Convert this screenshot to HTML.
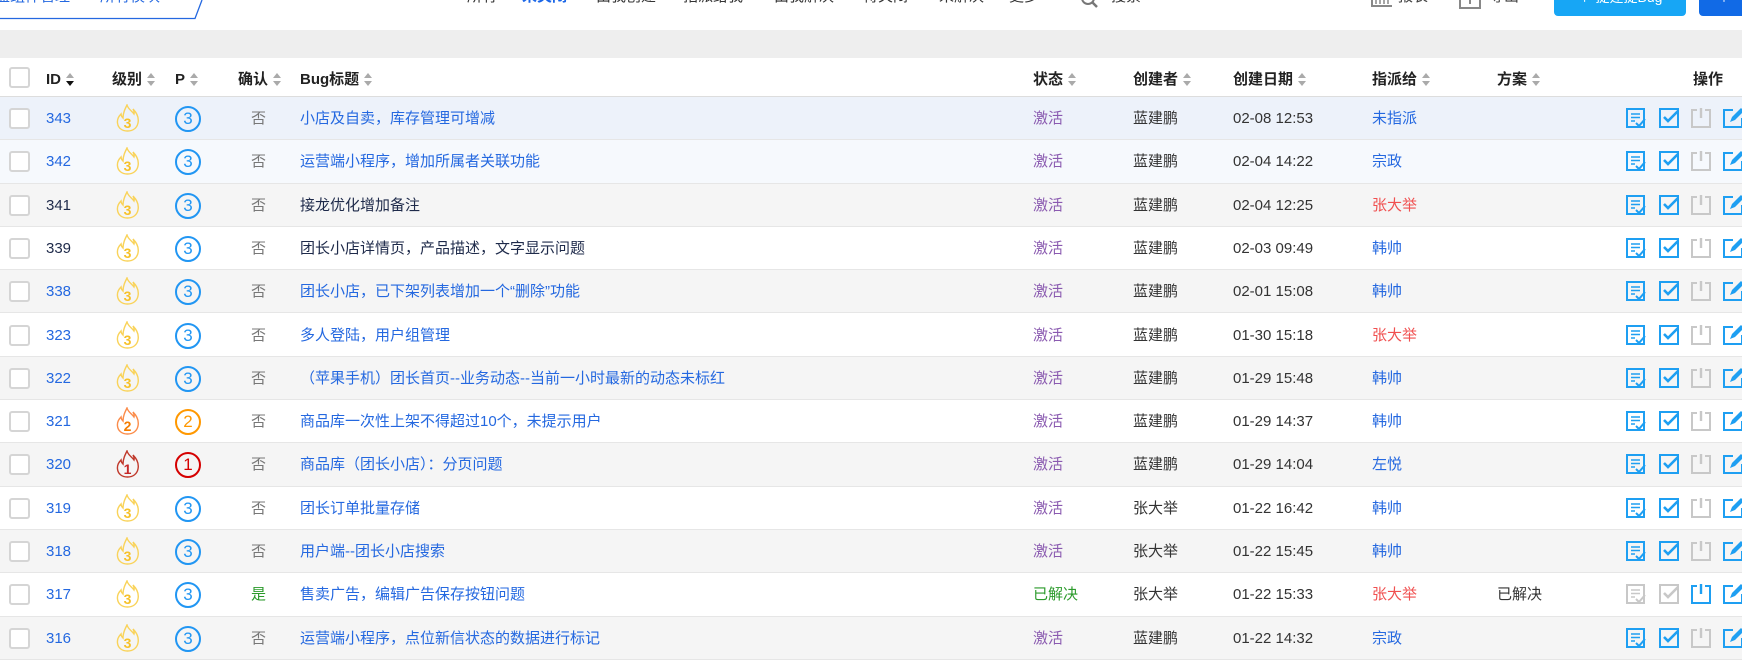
<!DOCTYPE html>
<html><head><meta charset="utf-8"><style>
*{margin:0;padding:0;box-sizing:border-box}
body{width:1742px;height:642px;overflow:hidden;background:#fff;font-family:"Liberation Sans","Noto Sans CJK SC",sans-serif;font-size:15px;color:#333;position:relative}
.a{position:absolute;white-space:nowrap}
.band{position:absolute;left:0;top:30px;width:1742px;height:28px;background:#eee}
.hdr{position:absolute;left:0;top:58px;width:1742px;height:39px;border-bottom:1px solid #ddd;font-weight:bold;color:#222}
.row{position:absolute;left:0;width:1742px;height:43.3px;border-bottom:1px solid #e6e6e6}
.cb{position:absolute;left:9px;width:21px;height:21px;border:2px solid #d5d5d5;border-radius:3px;background:#fff}
.s{display:inline-block;vertical-align:middle;margin-left:5px;width:9px;height:14px;position:relative}
.s:before{content:"";position:absolute;left:0;top:0;border:4.5px solid transparent;border-bottom:5px solid #aaa;border-top:0}
.s:after{content:"";position:absolute;left:0;top:8px;border:4.5px solid transparent;border-top:5px solid #aaa;border-bottom:0}
.sd:after{border-top-color:#111}
.c{line-height:43px;top:0}
.blue{color:#2468e0}.dk{color:#1e2a4a}.pur{color:#8a5ab0}.grn{color:#2a9a2a}.red{color:#f05050}.gr{color:#777}
.pc{position:absolute;left:175px;top:9px;width:26px;height:26px;border:2px solid #2196f3;border-radius:50%;color:#2196f3;text-align:center;line-height:22px;font-size:17px}
.fl{position:absolute;left:115px;top:7px}
.ic{position:absolute;top:11px}
.nv{top:-15px}
</style></head><body>

<div class="a nv" style="left:-5px;color:#2468e0;font-size:15px">盟组件管理　　所有模块</div>
<svg class="a" style="left:0;top:0" width="205" height="22"><path d="M0 18.5H195L202 0" fill="none" stroke="#2468e0" stroke-width="1.3"/></svg>
<div class="a nv" style="left:467px;color:#333">所有</div>
<div class="a nv" style="left:522px;color:#1a66e8;font-weight:bold">未关闭</div>
<div class="a nv" style="left:596px;color:#333">由我创建</div>
<div class="a nv" style="left:683px;color:#333">指派给我</div>
<div class="a nv" style="left:774px;color:#333">由我解决</div>
<div class="a nv" style="left:863px;color:#333">待关闭</div>
<div class="a nv" style="left:939px;color:#333">未解决</div>
<div class="a nv" style="left:1009px;color:#333">更多</div>
<svg class="a" style="left:1080px;top:0" width="20" height="10"><circle cx="8" cy="-2" r="6" fill="none" stroke="#777" stroke-width="2"/><path d="M12 2L17 7" stroke="#777" stroke-width="2.5"/></svg>
<div class="a nv" style="left:1111px;color:#333">搜索</div>
<svg class="a" style="left:1371px;top:0" width="22" height="8"><path d="M1 0V6H21" fill="none" stroke="#888" stroke-width="2"/><path d="M5 0V4M9 0V4M13 0V4M17 0V4" stroke="#888" stroke-width="1.5"/></svg>
<div class="a nv" style="left:1398px;color:#444">报表</div>
<svg class="a" style="left:1459px;top:0" width="22" height="10"><path d="M1 0V8H21V0" fill="none" stroke="#888" stroke-width="2"/><path d="M11 0V4" stroke="#888" stroke-width="2"/></svg>
<div class="a nv" style="left:1489px;color:#444">导出</div>
<div class="a" style="left:1554px;top:-8px;width:132px;height:24px;background:#17a6f5;border-radius:4px;color:#fff;text-align:center;font-size:14px;line-height:10px">＋ 提建提Bug</div>
<div class="a" style="left:1699px;top:-8px;width:60px;height:24px;background:#116ae6;border-radius:4px;color:#fff;font-size:14px;line-height:10px;padding-left:18px">＋</div>

<div class="band"></div>

<div class="hdr">
<div class="cb" style="top:9px"></div>
<div class="a c" style="left:46px">ID<span class="s sd"></span></div>
<div class="a c" style="left:112px">级别<span class="s"></span></div>
<div class="a c" style="left:175px">P<span class="s"></span></div>
<div class="a c" style="left:238px">确认<span class="s"></span></div>
<div class="a c" style="left:300px">Bug标题<span class="s"></span></div>
<div class="a c" style="left:1033px">状态<span class="s"></span></div>
<div class="a c" style="left:1133px">创建者<span class="s"></span></div>
<div class="a c" style="left:1233px">创建日期<span class="s"></span></div>
<div class="a c" style="left:1372px">指派给<span class="s"></span></div>
<div class="a c" style="left:1497px">方案<span class="s"></span></div>
<div class="a c" style="left:1693px">操作</div>
</div>

<svg width="0" height="0" style="position:absolute">
<defs>
<path id="flame" d="M12 1C13 5 17 7 19 10C19.5 8.5 19 7 18 5C22 9 24 14 23 19C22 24 18 27 12.5 27C7 27 3 24 2.5 19C2 15 4 12 6 10C6 12 7 13 8 14C8 9 10 5 12 1Z"/>
<g id="i1"><rect x="1" y="1" width="17" height="18" fill="none" stroke="currentColor" stroke-width="2"/><path d="M5 6H14M5 9.5H14M5 13H9" stroke="currentColor" stroke-width="1.5"/><path d="M10 15L13 18L19 11" fill="none" stroke="currentColor" stroke-width="2"/></g>
<g id="i2"><rect x="1" y="1" width="18" height="18" fill="none" stroke="currentColor" stroke-width="2"/><path d="M5 9L9 13L19 3" fill="none" stroke="currentColor" stroke-width="2.6"/></g>
<g id="i3"><path d="M6 2H1V19H19V2H14" fill="none" stroke="currentColor" stroke-width="2"/><path d="M10 0V10" stroke="currentColor" stroke-width="2.4"/></g>
<g id="i4"><path d="M10 2H1V19H19V10" fill="none" stroke="currentColor" stroke-width="2"/><path d="M7 14L9 9L18 0L21 3L12 12Z" fill="currentColor"/></g>
</defs></svg>

<div class="row" style="top:97px;background:#edf2fa"><div class="cb" style="top:11px"></div><div class="a c blue" style="left:46px">343</div><svg class="fl" width="26" height="28"><use href="#flame" fill="none" stroke="#f9d35a" stroke-width="1.4"/><text x="12.5" y="24" font-size="14" font-weight="bold" fill="#f6c12a" text-anchor="middle" font-family="Liberation Sans">3</text></svg><div class="pc">3</div><div class="a c gr" style="left:251px">否</div><div class="a c blue" style="left:300px">小店及自卖，库存管理可增减</div><div class="a c pur" style="left:1033px">激活</div><div class="a c" style="left:1133px">蓝建鹏</div><div class="a c" style="left:1233px">02-08 12:53</div><div class="a c blue" style="left:1372px">未指派</div><svg class="ic" style="left:1626px;color:#1e9ff2" width="21" height="21"><use href="#i1"/></svg><svg class="ic" style="left:1659px;color:#1e9ff2" width="21" height="21"><use href="#i2"/></svg><svg class="ic" style="left:1691px;color:#c8c8c8" width="21" height="21"><use href="#i3"/></svg><svg class="ic" style="left:1723px;color:#1e9ff2" width="22" height="21"><use href="#i4"/></svg></div>

<div class="row" style="top:140.3px;background:#f6f9fd"><div class="cb" style="top:11px"></div><div class="a c blue" style="left:46px">342</div><svg class="fl" width="26" height="28"><use href="#flame" fill="none" stroke="#f9d35a" stroke-width="1.4"/><text x="12.5" y="24" font-size="14" font-weight="bold" fill="#f6c12a" text-anchor="middle" font-family="Liberation Sans">3</text></svg><div class="pc">3</div><div class="a c gr" style="left:251px">否</div><div class="a c blue" style="left:300px">运营端小程序，增加所属者关联功能</div><div class="a c pur" style="left:1033px">激活</div><div class="a c" style="left:1133px">蓝建鹏</div><div class="a c" style="left:1233px">02-04 14:22</div><div class="a c blue" style="left:1372px">宗政</div><svg class="ic" style="left:1626px;color:#1e9ff2" width="21" height="21"><use href="#i1"/></svg><svg class="ic" style="left:1659px;color:#1e9ff2" width="21" height="21"><use href="#i2"/></svg><svg class="ic" style="left:1691px;color:#c8c8c8" width="21" height="21"><use href="#i3"/></svg><svg class="ic" style="left:1723px;color:#1e9ff2" width="22" height="21"><use href="#i4"/></svg></div>

<div class="row" style="top:183.6px;background:#f5f5f5"><div class="cb" style="top:11px"></div><div class="a c dk" style="left:46px">341</div><svg class="fl" width="26" height="28"><use href="#flame" fill="none" stroke="#f9d35a" stroke-width="1.4"/><text x="12.5" y="24" font-size="14" font-weight="bold" fill="#f6c12a" text-anchor="middle" font-family="Liberation Sans">3</text></svg><div class="pc">3</div><div class="a c gr" style="left:251px">否</div><div class="a c dk" style="left:300px">接龙优化增加备注</div><div class="a c pur" style="left:1033px">激活</div><div class="a c" style="left:1133px">蓝建鹏</div><div class="a c" style="left:1233px">02-04 12:25</div><div class="a c red" style="left:1372px">张大举</div><svg class="ic" style="left:1626px;color:#1e9ff2" width="21" height="21"><use href="#i1"/></svg><svg class="ic" style="left:1659px;color:#1e9ff2" width="21" height="21"><use href="#i2"/></svg><svg class="ic" style="left:1691px;color:#c8c8c8" width="21" height="21"><use href="#i3"/></svg><svg class="ic" style="left:1723px;color:#1e9ff2" width="22" height="21"><use href="#i4"/></svg></div>

<div class="row" style="top:226.9px;background:#fff"><div class="cb" style="top:11px"></div><div class="a c dk" style="left:46px">339</div><svg class="fl" width="26" height="28"><use href="#flame" fill="none" stroke="#f9d35a" stroke-width="1.4"/><text x="12.5" y="24" font-size="14" font-weight="bold" fill="#f6c12a" text-anchor="middle" font-family="Liberation Sans">3</text></svg><div class="pc">3</div><div class="a c gr" style="left:251px">否</div><div class="a c dk" style="left:300px">团长小店详情页，产品描述，文字显示问题</div><div class="a c pur" style="left:1033px">激活</div><div class="a c" style="left:1133px">蓝建鹏</div><div class="a c" style="left:1233px">02-03 09:49</div><div class="a c blue" style="left:1372px">韩帅</div><svg class="ic" style="left:1626px;color:#1e9ff2" width="21" height="21"><use href="#i1"/></svg><svg class="ic" style="left:1659px;color:#1e9ff2" width="21" height="21"><use href="#i2"/></svg><svg class="ic" style="left:1691px;color:#c8c8c8" width="21" height="21"><use href="#i3"/></svg><svg class="ic" style="left:1723px;color:#1e9ff2" width="22" height="21"><use href="#i4"/></svg></div>

<div class="row" style="top:270.2px;background:#f5f5f5"><div class="cb" style="top:11px"></div><div class="a c blue" style="left:46px">338</div><svg class="fl" width="26" height="28"><use href="#flame" fill="none" stroke="#f9d35a" stroke-width="1.4"/><text x="12.5" y="24" font-size="14" font-weight="bold" fill="#f6c12a" text-anchor="middle" font-family="Liberation Sans">3</text></svg><div class="pc">3</div><div class="a c gr" style="left:251px">否</div><div class="a c blue" style="left:300px">团长小店，已下架列表增加一个“删除”功能</div><div class="a c pur" style="left:1033px">激活</div><div class="a c" style="left:1133px">蓝建鹏</div><div class="a c" style="left:1233px">02-01 15:08</div><div class="a c blue" style="left:1372px">韩帅</div><svg class="ic" style="left:1626px;color:#1e9ff2" width="21" height="21"><use href="#i1"/></svg><svg class="ic" style="left:1659px;color:#1e9ff2" width="21" height="21"><use href="#i2"/></svg><svg class="ic" style="left:1691px;color:#c8c8c8" width="21" height="21"><use href="#i3"/></svg><svg class="ic" style="left:1723px;color:#1e9ff2" width="22" height="21"><use href="#i4"/></svg></div>

<div class="row" style="top:313.5px;background:#fff"><div class="cb" style="top:11px"></div><div class="a c blue" style="left:46px">323</div><svg class="fl" width="26" height="28"><use href="#flame" fill="none" stroke="#f9d35a" stroke-width="1.4"/><text x="12.5" y="24" font-size="14" font-weight="bold" fill="#f6c12a" text-anchor="middle" font-family="Liberation Sans">3</text></svg><div class="pc">3</div><div class="a c gr" style="left:251px">否</div><div class="a c blue" style="left:300px">多人登陆，用户组管理</div><div class="a c pur" style="left:1033px">激活</div><div class="a c" style="left:1133px">蓝建鹏</div><div class="a c" style="left:1233px">01-30 15:18</div><div class="a c red" style="left:1372px">张大举</div><svg class="ic" style="left:1626px;color:#1e9ff2" width="21" height="21"><use href="#i1"/></svg><svg class="ic" style="left:1659px;color:#1e9ff2" width="21" height="21"><use href="#i2"/></svg><svg class="ic" style="left:1691px;color:#c8c8c8" width="21" height="21"><use href="#i3"/></svg><svg class="ic" style="left:1723px;color:#1e9ff2" width="22" height="21"><use href="#i4"/></svg></div>

<div class="row" style="top:356.8px;background:#f5f5f5"><div class="cb" style="top:11px"></div><div class="a c blue" style="left:46px">322</div><svg class="fl" width="26" height="28"><use href="#flame" fill="none" stroke="#f9d35a" stroke-width="1.4"/><text x="12.5" y="24" font-size="14" font-weight="bold" fill="#f6c12a" text-anchor="middle" font-family="Liberation Sans">3</text></svg><div class="pc">3</div><div class="a c gr" style="left:251px">否</div><div class="a c blue" style="left:300px">（苹果手机）团长首页--业务动态--当前一小时最新的动态未标红</div><div class="a c pur" style="left:1033px">激活</div><div class="a c" style="left:1133px">蓝建鹏</div><div class="a c" style="left:1233px">01-29 15:48</div><div class="a c blue" style="left:1372px">韩帅</div><svg class="ic" style="left:1626px;color:#1e9ff2" width="21" height="21"><use href="#i1"/></svg><svg class="ic" style="left:1659px;color:#1e9ff2" width="21" height="21"><use href="#i2"/></svg><svg class="ic" style="left:1691px;color:#c8c8c8" width="21" height="21"><use href="#i3"/></svg><svg class="ic" style="left:1723px;color:#1e9ff2" width="22" height="21"><use href="#i4"/></svg></div>

<div class="row" style="top:400.1px;background:#fff"><div class="cb" style="top:11px"></div><div class="a c blue" style="left:46px">321</div><svg class="fl" width="26" height="28"><use href="#flame" fill="none" stroke="#fb8c4a" stroke-width="1.4"/><text x="12.5" y="24" font-size="14" font-weight="bold" fill="#f57c00" text-anchor="middle" font-family="Liberation Sans">2</text></svg><div class="pc" style="border-color:#ff9800;color:#ff9800">2</div><div class="a c gr" style="left:251px">否</div><div class="a c blue" style="left:300px">商品库一次性上架不得超过10个，未提示用户</div><div class="a c pur" style="left:1033px">激活</div><div class="a c" style="left:1133px">蓝建鹏</div><div class="a c" style="left:1233px">01-29 14:37</div><div class="a c blue" style="left:1372px">韩帅</div><svg class="ic" style="left:1626px;color:#1e9ff2" width="21" height="21"><use href="#i1"/></svg><svg class="ic" style="left:1659px;color:#1e9ff2" width="21" height="21"><use href="#i2"/></svg><svg class="ic" style="left:1691px;color:#c8c8c8" width="21" height="21"><use href="#i3"/></svg><svg class="ic" style="left:1723px;color:#1e9ff2" width="22" height="21"><use href="#i4"/></svg></div>

<div class="row" style="top:443.4px;background:#f5f5f5"><div class="cb" style="top:11px"></div><div class="a c blue" style="left:46px">320</div><svg class="fl" width="26" height="28"><use href="#flame" fill="none" stroke="#c0392b" stroke-width="1.4"/><text x="12.5" y="24" font-size="14" font-weight="bold" fill="#c62828" text-anchor="middle" font-family="Liberation Sans">1</text></svg><div class="pc" style="border-color:#d50000;color:#d50000">1</div><div class="a c gr" style="left:251px">否</div><div class="a c blue" style="left:300px">商品库（团长小店）：分页问题</div><div class="a c pur" style="left:1033px">激活</div><div class="a c" style="left:1133px">蓝建鹏</div><div class="a c" style="left:1233px">01-29 14:04</div><div class="a c blue" style="left:1372px">左悦</div><svg class="ic" style="left:1626px;color:#1e9ff2" width="21" height="21"><use href="#i1"/></svg><svg class="ic" style="left:1659px;color:#1e9ff2" width="21" height="21"><use href="#i2"/></svg><svg class="ic" style="left:1691px;color:#c8c8c8" width="21" height="21"><use href="#i3"/></svg><svg class="ic" style="left:1723px;color:#1e9ff2" width="22" height="21"><use href="#i4"/></svg></div>

<div class="row" style="top:486.7px;background:#fff"><div class="cb" style="top:11px"></div><div class="a c blue" style="left:46px">319</div><svg class="fl" width="26" height="28"><use href="#flame" fill="none" stroke="#f9d35a" stroke-width="1.4"/><text x="12.5" y="24" font-size="14" font-weight="bold" fill="#f6c12a" text-anchor="middle" font-family="Liberation Sans">3</text></svg><div class="pc">3</div><div class="a c gr" style="left:251px">否</div><div class="a c blue" style="left:300px">团长订单批量存储</div><div class="a c pur" style="left:1033px">激活</div><div class="a c" style="left:1133px">张大举</div><div class="a c" style="left:1233px">01-22 16:42</div><div class="a c blue" style="left:1372px">韩帅</div><svg class="ic" style="left:1626px;color:#1e9ff2" width="21" height="21"><use href="#i1"/></svg><svg class="ic" style="left:1659px;color:#1e9ff2" width="21" height="21"><use href="#i2"/></svg><svg class="ic" style="left:1691px;color:#c8c8c8" width="21" height="21"><use href="#i3"/></svg><svg class="ic" style="left:1723px;color:#1e9ff2" width="22" height="21"><use href="#i4"/></svg></div>

<div class="row" style="top:530px;background:#f5f5f5"><div class="cb" style="top:11px"></div><div class="a c blue" style="left:46px">318</div><svg class="fl" width="26" height="28"><use href="#flame" fill="none" stroke="#f9d35a" stroke-width="1.4"/><text x="12.5" y="24" font-size="14" font-weight="bold" fill="#f6c12a" text-anchor="middle" font-family="Liberation Sans">3</text></svg><div class="pc">3</div><div class="a c gr" style="left:251px">否</div><div class="a c blue" style="left:300px">用户端--团长小店搜索</div><div class="a c pur" style="left:1033px">激活</div><div class="a c" style="left:1133px">张大举</div><div class="a c" style="left:1233px">01-22 15:45</div><div class="a c blue" style="left:1372px">韩帅</div><svg class="ic" style="left:1626px;color:#1e9ff2" width="21" height="21"><use href="#i1"/></svg><svg class="ic" style="left:1659px;color:#1e9ff2" width="21" height="21"><use href="#i2"/></svg><svg class="ic" style="left:1691px;color:#c8c8c8" width="21" height="21"><use href="#i3"/></svg><svg class="ic" style="left:1723px;color:#1e9ff2" width="22" height="21"><use href="#i4"/></svg></div>

<div class="row" style="top:573.3px;background:#fff"><div class="cb" style="top:11px"></div><div class="a c blue" style="left:46px">317</div><svg class="fl" width="26" height="28"><use href="#flame" fill="none" stroke="#f9d35a" stroke-width="1.4"/><text x="12.5" y="24" font-size="14" font-weight="bold" fill="#f6c12a" text-anchor="middle" font-family="Liberation Sans">3</text></svg><div class="pc">3</div><div class="a c grn" style="left:251px">是</div><div class="a c blue" style="left:300px">售卖广告，编辑广告保存按钮问题</div><div class="a c grn" style="left:1033px">已解决</div><div class="a c" style="left:1133px">张大举</div><div class="a c" style="left:1233px">01-22 15:33</div><div class="a c red" style="left:1372px">张大举</div><div class="a c" style="left:1497px">已解决</div><svg class="ic" style="left:1626px;color:#c8c8c8" width="21" height="21"><use href="#i1"/></svg><svg class="ic" style="left:1659px;color:#c8c8c8" width="21" height="21"><use href="#i2"/></svg><svg class="ic" style="left:1691px;color:#1e9ff2" width="21" height="21"><use href="#i3"/></svg><svg class="ic" style="left:1723px;color:#1e9ff2" width="22" height="21"><use href="#i4"/></svg></div>

<div class="row" style="top:616.6px;background:#f5f5f5"><div class="cb" style="top:11px"></div><div class="a c blue" style="left:46px">316</div><svg class="fl" width="26" height="28"><use href="#flame" fill="none" stroke="#f9d35a" stroke-width="1.4"/><text x="12.5" y="24" font-size="14" font-weight="bold" fill="#f6c12a" text-anchor="middle" font-family="Liberation Sans">3</text></svg><div class="pc">3</div><div class="a c gr" style="left:251px">否</div><div class="a c blue" style="left:300px">运营端小程序，点位新信状态的数据进行标记</div><div class="a c pur" style="left:1033px">激活</div><div class="a c" style="left:1133px">蓝建鹏</div><div class="a c" style="left:1233px">01-22 14:32</div><div class="a c blue" style="left:1372px">宗政</div><svg class="ic" style="left:1626px;color:#1e9ff2" width="21" height="21"><use href="#i1"/></svg><svg class="ic" style="left:1659px;color:#1e9ff2" width="21" height="21"><use href="#i2"/></svg><svg class="ic" style="left:1691px;color:#c8c8c8" width="21" height="21"><use href="#i3"/></svg><svg class="ic" style="left:1723px;color:#1e9ff2" width="22" height="21"><use href="#i4"/></svg></div>

</body></html>
